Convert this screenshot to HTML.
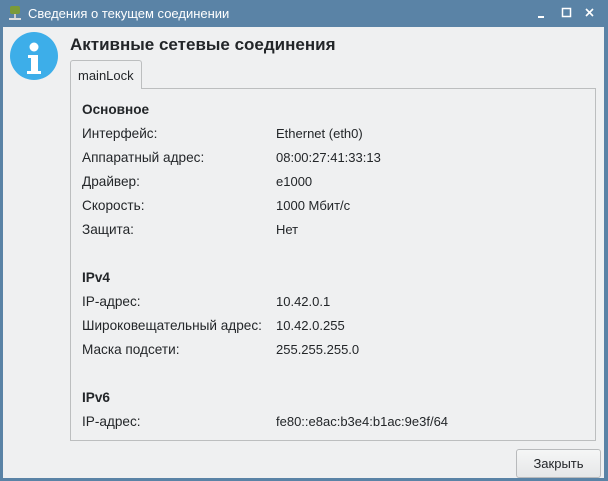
<!DOCTYPE html>
<html><head><meta charset="utf-8"><style>
*{margin:0;padding:0;box-sizing:border-box}
body{width:608px;height:481px;background:#5a83a6;font-family:"Liberation Sans","DejaVu Sans",sans-serif;font-size:13px;color:#232629;position:relative;overflow:hidden}
.title{position:absolute;left:28px;top:6px;color:#fff;font-size:13px}
.win{position:absolute;left:3px;top:27px;width:601px;height:451px;background:#eff0f1}
.abs{position:absolute}
.panel{position:absolute;left:70px;top:88px;width:526px;height:353px;border:1px solid #bcbebf;background:#eff0f1}
.tab{position:absolute;left:70px;top:60px;width:72px;height:29px;border:1px solid #bcbebf;border-bottom:none;border-radius:3px 3px 0 0;background:#eff0f1;padding:7px 0 0 7px;font-size:13px;z-index:2}
.l{position:absolute;left:82px;font-size:13.6px}
.v{position:absolute;left:276px}
.h{font-weight:bold}
.btn{position:absolute;left:516px;top:449px;width:85px;height:29px;border:1px solid #b8babc;border-radius:3px;background:linear-gradient(#f5f6f6,#e6e7e8);text-align:center;line-height:27px}
</style></head><body>
<svg class="abs" style="left:8px;top:5px" width="14" height="16"><rect x="2" y="1" width="10" height="8" rx="2" fill="#7a9a3a"/><rect x="6" y="9" width="2" height="4" fill="#ccc"/><rect x="1" y="13" width="12" height="2" fill="#ddd"/></svg>
<div class="title">Сведения о текущем соединении</div>
<svg class="abs" style="left:538px;top:6px" width="66" height="16"><rect x="0" y="10" width="6" height="2" fill="#fff"/><rect x="24.5" y="2.5" width="8" height="8" fill="none" stroke="#fff" stroke-width="1.5"/><path d="M48 3l7 7M55 3l-7 7" stroke="#fff" stroke-width="1.6"/></svg>
<div class="win"></div>
<svg class="abs" style="left:10px;top:32px" width="50" height="50"><circle cx="24" cy="24" r="24" fill="#3daee9"/><circle cx="24" cy="15" r="4.5" fill="#fff"/><path d="M18 23h10v16h3v3H17v-3h4V26h-3z" fill="#fff"/></svg>
<div class="abs h" style="left:70px;top:35px;font-size:17px">Активные сетевые соединения</div>
<div class="panel"></div>
<div class="tab">mainLock</div>
<div class="l h" style="top:102px">Основное</div>
<div class="l" style="top:126px">Интерфейс:</div><div class="v" style="top:126px">Ethernet (eth0)</div>
<div class="l" style="top:150px">Аппаратный адрес:</div><div class="v" style="top:150px">08:00:27:41:33:13</div>
<div class="l" style="top:174px">Драйвер:</div><div class="v" style="top:174px">e1000</div>
<div class="l" style="top:198px">Скорость:</div><div class="v" style="top:198px">1000 Мбит/с</div>
<div class="l" style="top:222px">Защита:</div><div class="v" style="top:222px">Нет</div>
<div class="l h" style="top:270px">IPv4</div>
<div class="l" style="top:294px">IP-адрес:</div><div class="v" style="top:294px">10.42.0.1</div>
<div class="l" style="top:318px">Широковещательный адрес:</div><div class="v" style="top:318px">10.42.0.255</div>
<div class="l" style="top:342px">Маска подсети:</div><div class="v" style="top:342px">255.255.255.0</div>
<div class="l h" style="top:390px">IPv6</div>
<div class="l" style="top:414px">IP-адрес:</div><div class="v" style="top:414px">fe80::e8ac:b3e4:b1ac:9e3f/64</div>
<div class="btn">Закрыть</div>
</body></html>
